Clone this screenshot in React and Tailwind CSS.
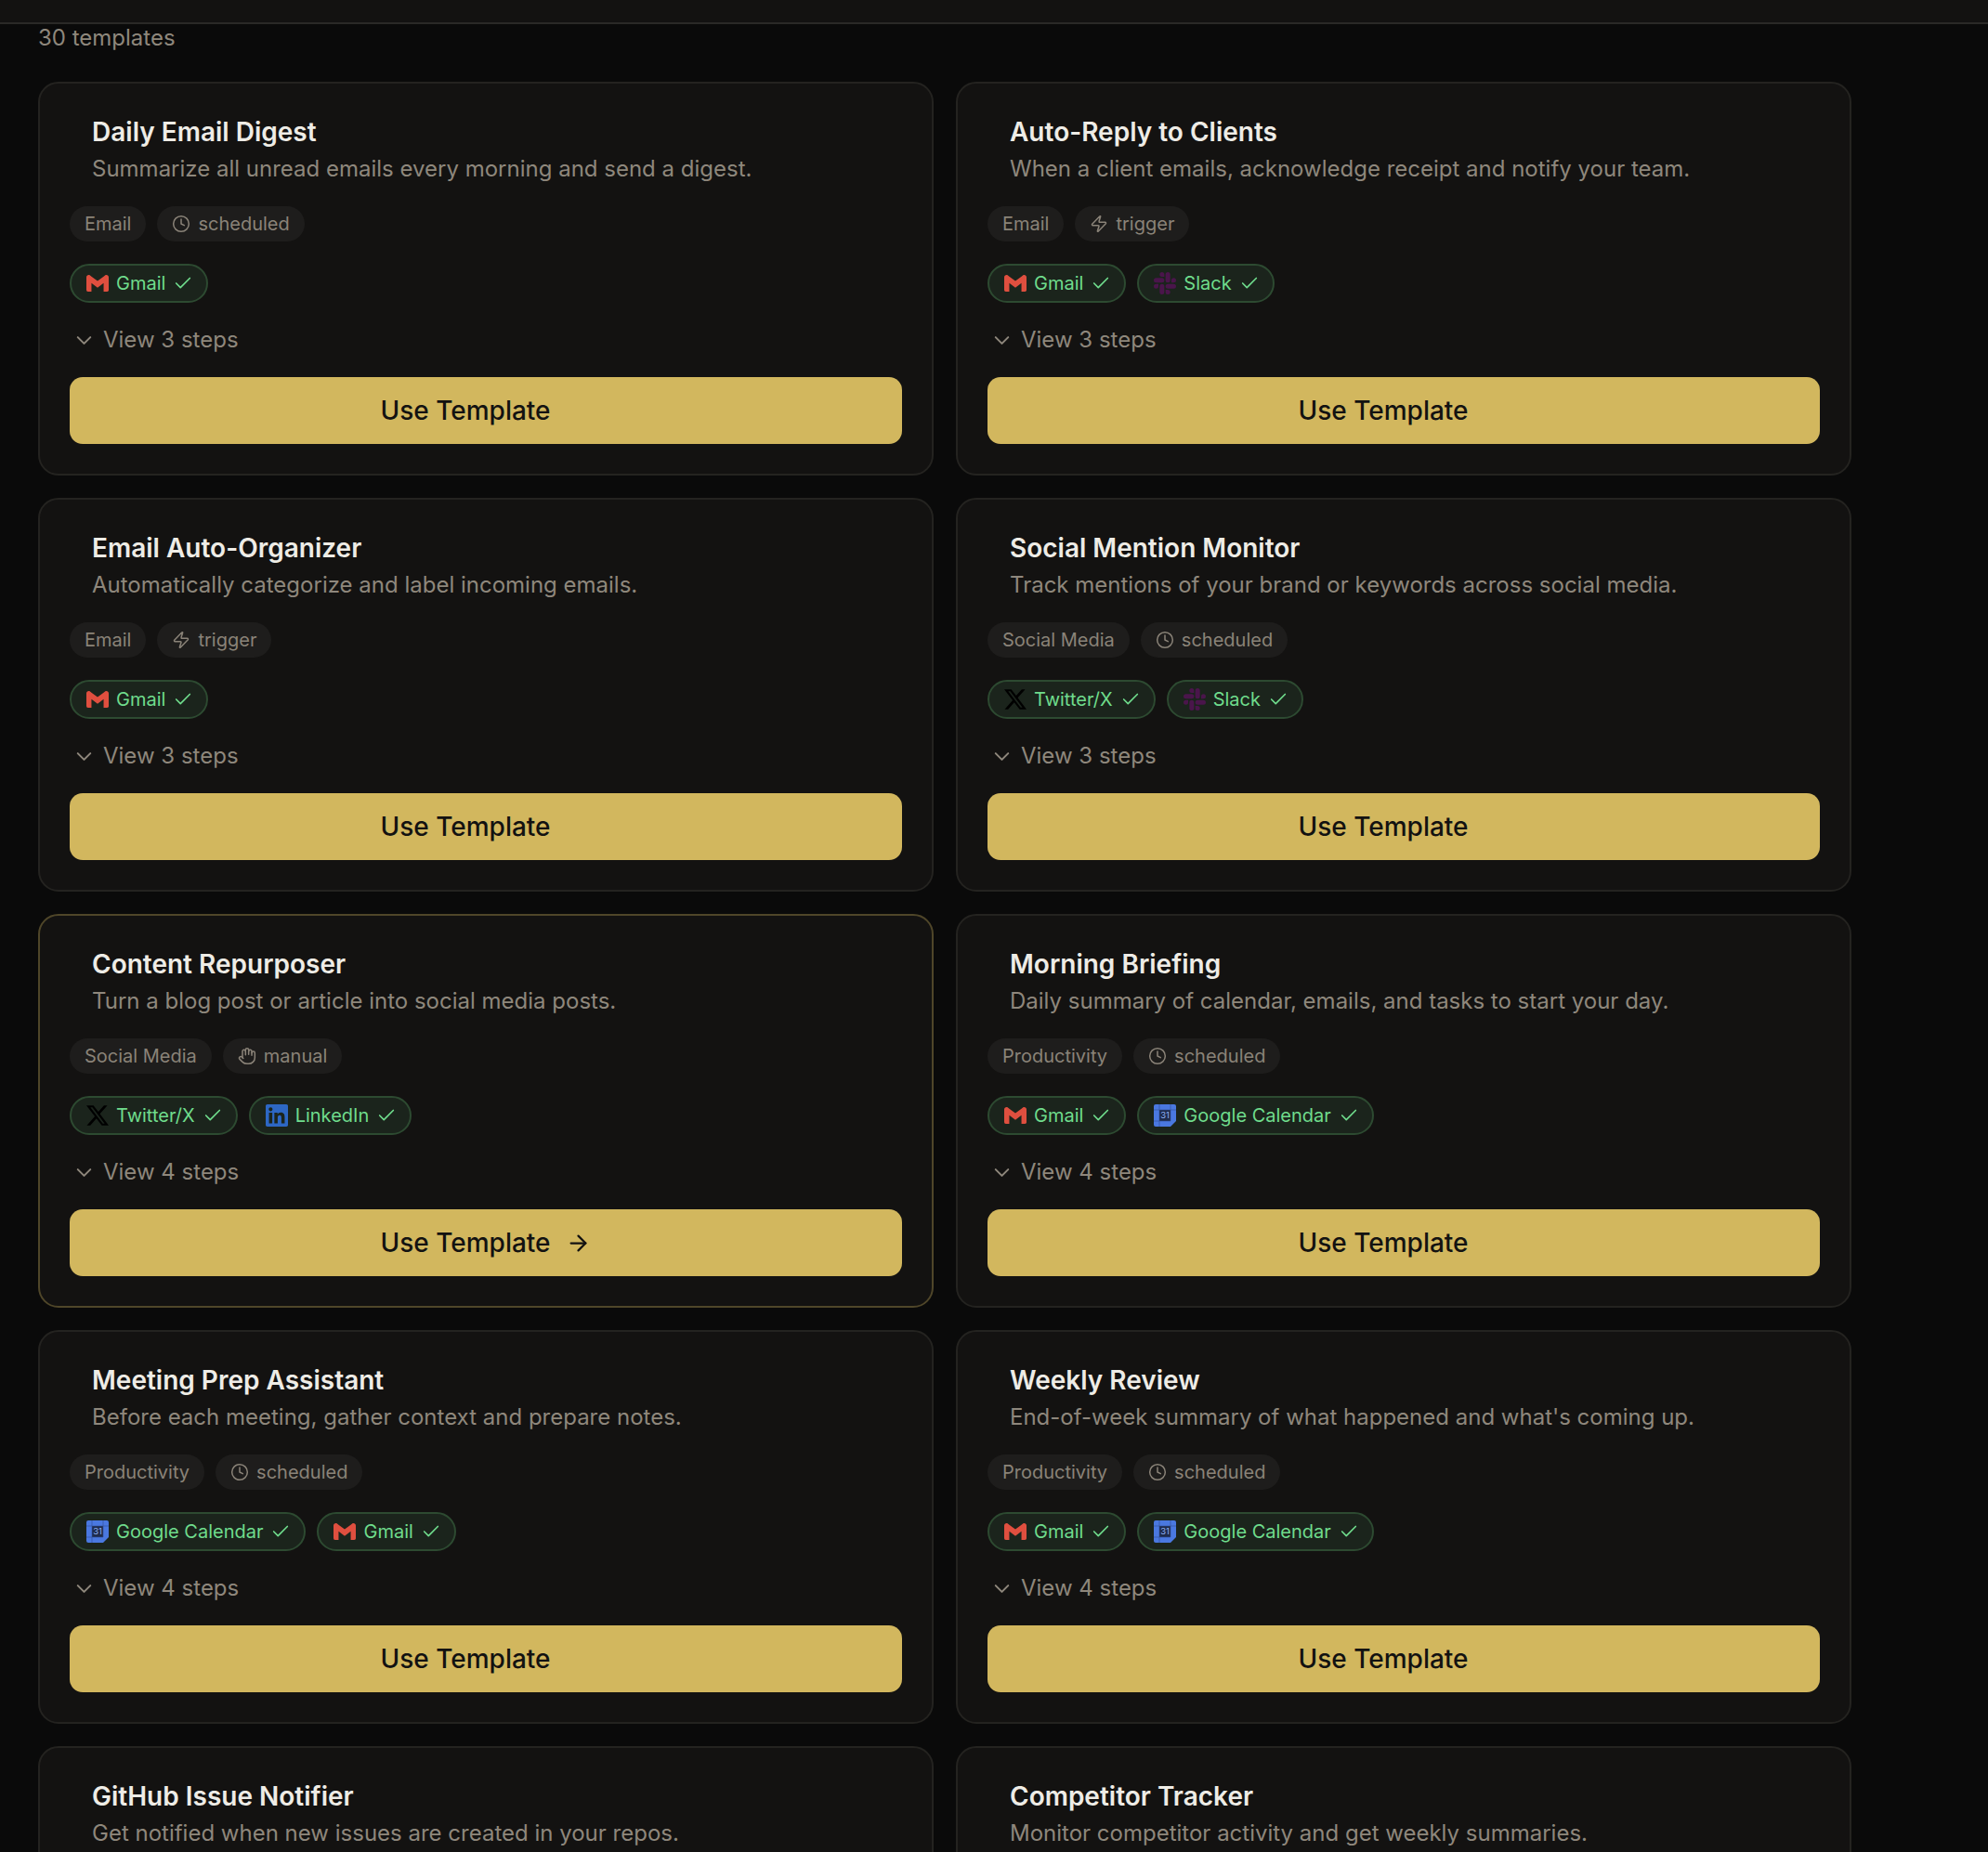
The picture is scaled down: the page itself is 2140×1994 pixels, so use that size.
import { ArrowRight, Check, ChevronDown, Clock, Hand, Zap } from "lucide-react";
import { SiGmail, SiLinkedin, SiSlack, SiX } from "react-icons/si";

const GoogleCalendarIcon = () => (
  <svg viewBox="0 0 24 24" className="w-[24px] h-[24px] shrink-0">
    <path d="M2 0h20a2 2 0 0 1 2 2v16l-6 6H2a2 2 0 0 1-2-2V2a2 2 0 0 1 2-2z" fill="#4a78e0" />
    <rect x="6" y="6" width="12" height="12" fill="#1f2c4d" />
    <path d="M6 0v24M18 0v18M0 6h24M0 18h18" stroke="#2f4f96" strokeWidth="0.6" />
    <text x="12" y="15.4" textAnchor="middle" fontSize="9.5" fontFamily="Inter, sans-serif" fill="#8fb2f7">
      31
    </text>
  </svg>
);

const services = {
  Gmail: <SiGmail className="w-[24px] h-[24px] shrink-0 text-[#df4f3f]" />,
  Slack: <SiSlack className="w-[24px] h-[24px] shrink-0 text-[#4a154b]" />,
  "Twitter/X": <SiX className="w-[24px] h-[24px] shrink-0 text-black" />,
  LinkedIn: <SiLinkedin className="w-[24px] h-[24px] shrink-0 text-[#2d67c4]" />,
  "Google Calendar": <GoogleCalendarIcon />,
};

const triggers = { scheduled: Clock, trigger: Zap, manual: Hand };

const templates = [
  { title: "Daily Email Digest", desc: "Summarize all unread emails every morning and send a digest.", cat: "Email", type: "scheduled", apps: ["Gmail"], steps: 3 },
  { title: "Auto-Reply to Clients", desc: "When a client emails, acknowledge receipt and notify your team.", cat: "Email", type: "trigger", apps: ["Gmail", "Slack"], steps: 3 },
  { title: "Email Auto-Organizer", desc: "Automatically categorize and label incoming emails.", cat: "Email", type: "trigger", apps: ["Gmail"], steps: 3 },
  { title: "Social Mention Monitor", desc: "Track mentions of your brand or keywords across social media.", cat: "Social Media", type: "scheduled", apps: ["Twitter/X", "Slack"], steps: 3 },
  { title: "Content Repurposer", desc: "Turn a blog post or article into social media posts.", cat: "Social Media", type: "manual", apps: ["Twitter/X", "LinkedIn"], steps: 4, hover: true },
  { title: "Morning Briefing", desc: "Daily summary of calendar, emails, and tasks to start your day.", cat: "Productivity", type: "scheduled", apps: ["Gmail", "Google Calendar"], steps: 4 },
  { title: "Meeting Prep Assistant", desc: "Before each meeting, gather context and prepare notes.", cat: "Productivity", type: "scheduled", apps: ["Google Calendar", "Gmail"], steps: 4 },
  { title: "Weekly Review", desc: "End-of-week summary of what happened and what's coming up.", cat: "Productivity", type: "scheduled", apps: ["Gmail", "Google Calendar"], steps: 4 },
  { title: "GitHub Issue Notifier", desc: "Get notified when new issues are created in your repos." },
  { title: "Competitor Tracker", desc: "Monitor competitor activity and get weekly summaries." },
];

const TemplateCard = ({ item }) => {
  const TypeIcon = triggers[item.type];

  return (
    <div
      className={`h-[424px] rounded-[22px] border-2 bg-[#131211] px-[32px] pt-[32px] ${
        item.hover ? "border-[#4f4629]" : "border-[#242320]"
      }`}
    >
      <div className="pl-[24px]">
        <h3 className="text-[28px] leading-[40px] font-semibold text-[#eeece6]">{item.title}</h3>
        <p className="mt-[1px] text-[24px] leading-[38px] text-[#8e877c]">{item.desc}</p>
      </div>

      {item.cat && (
        <>
          {/* Category and trigger type */}
          <div className="mt-[21px] flex gap-[12px] text-[20px] text-[#8a8378]">
            <span className="flex h-[38px] items-center rounded-full bg-[#1e1d1c] px-[16px]">{item.cat}</span>
            <span className="flex h-[38px] items-center gap-[8px] rounded-full bg-[#1e1d1c] px-[16px]">
              <TypeIcon className="h-[20px] w-[20px]" strokeWidth={1.8} />
              {item.type}
            </span>
          </div>

          {/* Connected services */}
          <div className="mt-[24px] flex gap-[12px]">
            {item.apps.map((app) => (
              <span
                key={app}
                className="flex h-[42px] items-center gap-[8px] rounded-full border-2 border-[#2d4a31] bg-[#1b241c] pl-[16px] pr-[14px] text-[20px] text-[#6fdc8c]"
              >
                {services[app]}
                {app}
                <Check className="h-[22px] w-[22px]" strokeWidth={1.8} />
              </span>
            ))}
          </div>

          <div className="mt-[24px] flex h-[32px] items-center gap-[7px] pl-[2px] text-[24px] text-[#8e877c]">
            <ChevronDown className="h-[27px] w-[27px]" strokeWidth={1.8} />
            View {item.steps} steps
          </div>

          <button className="mt-[24px] flex h-[72px] w-full items-center justify-center gap-[16px] rounded-[14px] bg-[#d2b75e] pr-[1px] text-[28px] font-medium text-[#131211]">
            Use Template
            <ArrowRight className={`h-[27px] w-[27px] ${item.hover ? "opacity-100" : "opacity-0"}`} strokeWidth={2} />
          </button>
        </>
      )}
    </div>
  );
};

export default function App() {
  return (
    <div className="h-[1994px] overflow-hidden bg-[#0a0a0a] font-['Inter',sans-serif]">
      <div className="h-[26px] border-b-2 border-[#2a2927] bg-[#131211]" />
      <div className="pl-[41px]">
        <p className="text-[24px] leading-[29px] text-[#8e877c]">30 templates</p>
        <div className="mt-[33px] grid w-[1952px] grid-cols-2 gap-[24px]">
          {templates.map((item) => (
            <TemplateCard key={item.title} item={item} />
          ))}
        </div>
      </div>
    </div>
  );
}
